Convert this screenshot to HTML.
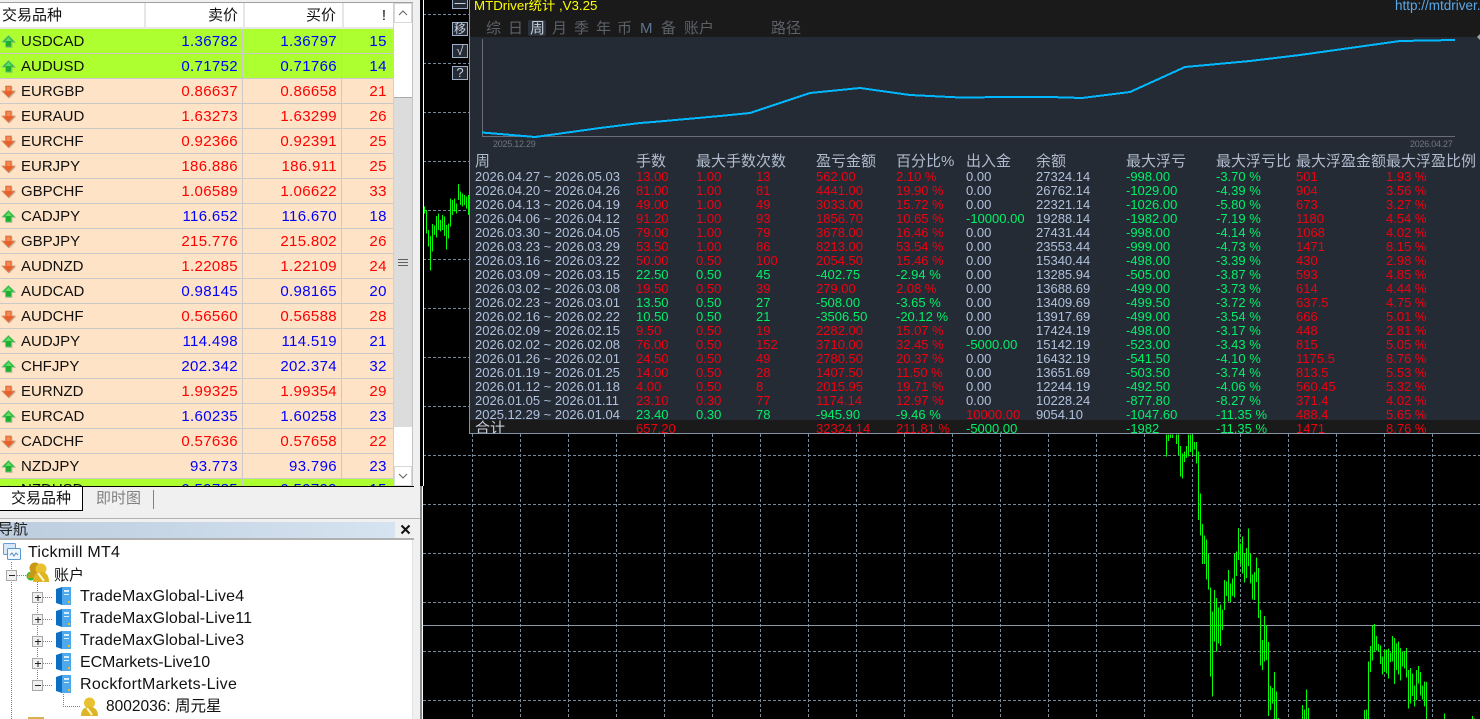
<!DOCTYPE html>
<html lang="zh">
<head>
<meta charset="utf-8">
<title>MTDriver</title>
<style>
*{box-sizing:border-box}
html,body{margin:0;padding:0;width:1480px;height:719px;overflow:hidden;background:#f0f0f0;font-family:"Liberation Sans","Noto Sans CJK SC",sans-serif}
.a{position:absolute}
#wl{left:0;top:3px;width:393px;height:26px;background:#fff;overflow:hidden}
#top{left:0;top:2px;width:413px;height:1px;background:#a0a0a0}
.h{position:absolute;top:0;height:24px;line-height:25px;font-size:15px;color:#111;text-align:right;padding-right:4px;background:#fff}
#hl{left:0;top:27px;width:393px;height:2px;background:#e6e6e6;z-index:1}
.sep{position:absolute;top:0;width:2px;height:24px;background:#e6e6e6}
#rows{left:0;top:29px;width:393px;height:457px;overflow:hidden}
.r{position:relative;height:25px;border-bottom:1px solid #c9c9c9;background:#ffe3c6;font-size:15px;line-height:26px;color:#f00}
.r.g{background:#adff2f}
.r svg{position:absolute;left:1px;top:5px;width:15px;height:15px}
.r b{position:absolute;left:21px;top:0;font-weight:400;color:#111}
.r i{position:absolute;top:0;height:25px;font-style:normal;text-align:right;border-right:1px solid #c9c9c9;padding-right:4px;letter-spacing:.35px}
.r i:nth-of-type(1){left:143px;width:100px}
.r i:nth-of-type(2){left:242px;width:100px}
.r s{position:absolute;left:342px;width:45px;text-align:right;text-decoration:none;letter-spacing:.5px;top:0}
.b{color:#00f}
#sb{left:393px;top:3px;width:20px;height:483px;background:#fff;border-left:1px solid #d0d0d0;border-right:1px solid #c4c4c4}
#th{left:394px;top:97px;width:18px;height:330px;background:#dcdcdc;border-top:1px solid #aaa}
.sbb{position:absolute;left:394px;width:18px;height:20px;background:#fff;border:1px solid #d8d8d8}
#tabs{left:0;top:486px;width:414px;height:33px;background:#f0f0f0;border-top:1px solid #000;border-bottom:1px solid #c8c8c8}
#tab1{left:0;top:487px;width:83px;height:24px;background:#fff;border-right:1px solid #000;border-bottom:1px solid #000;font-size:15px;line-height:24px;padding-left:11px;color:#111}
#tab2{left:96px;top:488px;font-size:15px;line-height:21px;color:#808080}
#tdiv{left:153px;top:490px;width:1px;height:19px;background:#808080}
#hb{left:0;top:518px;width:420px;height:1px;background:#b4b4b4}
#nt{left:0;top:522px;width:395px;height:17px;background:linear-gradient(90deg,#bccddf,#d6e3f0);font-size:15px;line-height:15px;text-indent:-2px;color:#222;overflow:hidden}
#nl{left:0;top:538px;width:414px;height:2px;background:#b0b0b0}
#tree{left:0;top:540px;width:413px;height:179px;background:#fff;border-right:1px solid #e2e2e2}
.t{position:absolute;font-size:16px;line-height:20px;color:#111;white-space:nowrap}
#g1{left:420px;top:0;width:3px;height:486px;background:#000}
#g2{left:423px;top:0;width:1px;height:486px;background:#fff}
#g3{left:420px;top:486px;width:2px;height:233px;background:#8a8a8a}
#g4{left:422px;top:486px;width:1px;height:233px;background:#fff}
#chart{left:423px;top:0;width:1057px;height:719px;background:#000}
#dash{left:469px;top:0;width:1011px;height:434px;background:#252b35;border-left:1px solid #8494a8;border-bottom:1px solid #8494a8;overflow:hidden}
#tb{left:0;top:0;width:1011px;height:37px;background:#1a1a1a}
#tot{left:0;top:420px;width:1011px;height:13px;background:#1a1a1a}
.x{position:absolute;white-space:nowrap}
.m{top:21px;font-size:15px;line-height:16px;color:#5c6168}
.q{left:452px;position:absolute;width:16px;height:14px;background:#252b35;border:1px solid #9fb0c8;color:#c9d4e2;font-size:12px;line-height:12px;text-align:center;overflow:hidden}
.hd span{position:absolute;top:0;font-size:15px;line-height:16px;color:#b0bccd;white-space:nowrap}
#data{left:5px;top:170px;width:1006px}
.d{position:relative;height:14px;font-size:13px;line-height:14px;color:#f00010}
.d span{position:absolute;top:0;white-space:nowrap}
.d span:nth-child(1){left:0;color:#b0c1dc}
.d span:nth-child(2){left:161px}
.d span:nth-child(3){left:221px}
.d span:nth-child(4){left:281px}
.d span:nth-child(5){left:341px}
.d span:nth-child(6){left:421px}
.d span:nth-child(7){left:491px;color:#b0c1dc}
.d span:nth-child(8){left:561px;color:#b0c1dc}
.d span:nth-child(9){left:651px;color:#00f068}
.d span:nth-child(10){left:741px;color:#00f068}
.d span:nth-child(11){left:821px;color:#f00010}
.d span:nth-child(12){left:911px;color:#f00010}
.d.n span:nth-child(2),.d.n span:nth-child(3),.d.n span:nth-child(4),.d.n span:nth-child(5),.d.n span:nth-child(6){color:#00f068}
.d span.gg{color:#00f068}
.d span.rr{color:#f00010}
</style>
</head>
<body>
<svg width="0" height="0" style="position:absolute">
<symbol id="u" viewBox="0 0 15 15"><path d="M8.500 2.500 15 9h-3.500v5h-6V9H2z" fill="#777" opacity=".35"/><path d="M7.500 1.500 14 8h-3.500v5h-6V8H1z" fill="#1fae2f" stroke="#7fc88a" stroke-width=".8"/><path d="M7.500 3 11 7H4z" fill="#5fe060"/></symbol>
<symbol id="d" viewBox="0 0 15 15"><path d="M5.500 3h6v5H15l-6.500 6.500L2 8h3.500z" fill="#777" opacity=".35"/><path d="M4.500 2h6v5H14l-6.500 6.500L1 7h3.500z" fill="#e8602a" stroke="#c9926e" stroke-width=".8"/><path d="M5.500 3h4v4h-4z" fill="#f58a50"/></symbol>
<symbol id="srv" viewBox="0 0 17 20"><path d="M1 3 7 1v18l-6-2z" fill="#0c6fc4"/><path d="M7 1h9v18H7z" fill="#4ea9ec"/><path d="M9 4h5v2H9zM9 8h5v1H9z" fill="#d8efff"/><path d="M13 15h2v2h-2z" fill="#f0c020"/></symbol>
</svg>

<div class="a" id="top"></div>
<div class="a" id="wl">
  <div class="h" style="left:0;width:143px;text-align:left;padding-left:2px">交易品种</div>
  <div class="h" style="left:145px;width:98px;padding-right:5px">卖价</div>
  <div class="h" style="left:245px;width:96px;padding-right:5px">买价</div>
  <div class="h" style="left:344px;width:48px;padding-right:6px">!</div>
  <div class="sep" style="left:144px"></div><div class="sep" style="left:243px"></div><div class="sep" style="left:342px"></div>
</div>
<div class="a" id="hl"></div>
<div class="a" id="rows">
<div class="r g b"><svg><use href="#u"/></svg><b>USDCAD</b><i>1.36782</i><i>1.36797</i><s>15</s></div>
<div class="r g b"><svg><use href="#u"/></svg><b>AUDUSD</b><i>0.71752</i><i>0.71766</i><s>14</s></div>
<div class="r"><svg><use href="#d"/></svg><b>EURGBP</b><i>0.86637</i><i>0.86658</i><s>21</s></div>
<div class="r"><svg><use href="#d"/></svg><b>EURAUD</b><i>1.63273</i><i>1.63299</i><s>26</s></div>
<div class="r"><svg><use href="#d"/></svg><b>EURCHF</b><i>0.92366</i><i>0.92391</i><s>25</s></div>
<div class="r"><svg><use href="#d"/></svg><b>EURJPY</b><i>186.886</i><i>186.911</i><s>25</s></div>
<div class="r"><svg><use href="#d"/></svg><b>GBPCHF</b><i>1.06589</i><i>1.06622</i><s>33</s></div>
<div class="r b"><svg><use href="#u"/></svg><b>CADJPY</b><i>116.652</i><i>116.670</i><s>18</s></div>
<div class="r"><svg><use href="#d"/></svg><b>GBPJPY</b><i>215.776</i><i>215.802</i><s>26</s></div>
<div class="r"><svg><use href="#d"/></svg><b>AUDNZD</b><i>1.22085</i><i>1.22109</i><s>24</s></div>
<div class="r b"><svg><use href="#u"/></svg><b>AUDCAD</b><i>0.98145</i><i>0.98165</i><s>20</s></div>
<div class="r"><svg><use href="#d"/></svg><b>AUDCHF</b><i>0.56560</i><i>0.56588</i><s>28</s></div>
<div class="r b"><svg><use href="#u"/></svg><b>AUDJPY</b><i>114.498</i><i>114.519</i><s>21</s></div>
<div class="r b"><svg><use href="#u"/></svg><b>CHFJPY</b><i>202.342</i><i>202.374</i><s>32</s></div>
<div class="r"><svg><use href="#d"/></svg><b>EURNZD</b><i>1.99325</i><i>1.99354</i><s>29</s></div>
<div class="r b"><svg><use href="#u"/></svg><b>EURCAD</b><i>1.60235</i><i>1.60258</i><s>23</s></div>
<div class="r"><svg><use href="#d"/></svg><b>CADCHF</b><i>0.57636</i><i>0.57658</i><s>22</s></div>
<div class="r b"><svg><use href="#u"/></svg><b>NZDJPY</b><i>93.773</i><i>93.796</i><s>23</s></div>
<div class="r g b" style="line-height:22px"><svg><use href="#u"/></svg><b>NZDUSD</b><i>0.59785</i><i>0.59799</i><s>15</s></div>
</div>

<div class="a" id="sb"></div>
<div class="a" id="th"></div>
<div class="sbb" style="top:3px"></div>
<div class="sbb" style="top:466px"></div>
<svg class="a" style="left:394px;top:3px" width="18" height="483"><path d="M5 12l4-4 4 4M5 471l4 4 4-4" fill="none" stroke="#606060" stroke-width="1"/><path d="M4 256.500h10M4 259.500h10M4 262.500h10" stroke="#606060"/></svg>

<div class="a" id="tabs"></div>
<div class="a" id="tab1">交易品种</div>
<div class="a" id="tab2">即时图</div>
<div class="a" id="tdiv"></div>
<div class="a" id="hb"></div>
<div class="a" id="nt">导航</div>
<svg class="a" style="left:400px;top:524px" width="11" height="11"><path d="M1.500 1.500l8 8M9.500 1.500l-8 8" stroke="#111" stroke-width="2" fill="none"/></svg>
<div class="a" id="nl"></div>

<div class="a" id="tree">
<svg class="a" style="left:0;top:0" width="413" height="179">
  <g fill="none" stroke="#808080" stroke-dasharray="1 1">
    <path d="M11.500 22V179M37.500 42V152M17 35.500h9M43 57.500h10M43 79.500h10M43 101.500h10M43 123.500h10M43 145.500h10M63.500 152V166.500H80"/>
  </g>
  <g fill="#f0f0f0" stroke="#a8a8a8">
    <rect x="6.500" y="30.500" width="10" height="10"/>
    <rect x="32.500" y="52.500" width="10" height="10"/><rect x="32.500" y="74.500" width="10" height="10"/><rect x="32.500" y="96.500" width="10" height="10"/><rect x="32.500" y="118.500" width="10" height="10"/><rect x="32.500" y="140.500" width="10" height="10"/>
  </g>
  <path d="M9 35.500h6M35 57.500h6M38 55v6M35 79.500h6M38 77v6M35 101.500h6M38 99v6M35 123.500h6M38 121v6M35 145.500h6" stroke="#222" fill="none"/>
  <rect x="3.500" y="3.500" width="12" height="11" rx="1" fill="#d8e8f8" stroke="#6a9ed0"/>
  <rect x="7.500" y="8.500" width="13" height="11" rx="1" fill="#eef6ff" stroke="#5a96d0"/>
  <path d="M10 15l2-2 2 3 2-3 2 2" fill="none" stroke="#5a8ac0"/>
  <circle cx="31" cy="36" r="4.500" fill="#2ec02e"/>
  <circle cx="35" cy="28" r="5.500" fill="#c89818"/><path d="M28 38q0-7 7-7t7 7z" fill="#c89818"/>
  <circle cx="41" cy="29" r="5.500" fill="#e8c030"/><path d="M33 42q0-10 8-10t8 10z" fill="#dcb424"/><path d="M38 33l6 8" stroke="#fff6c0" stroke-width="2"/>
  <circle cx="89.500" cy="163" r="5.500" fill="#e8c030"/><path d="M81 176q0-9 8.500-9t8.500 9z" fill="#dcb424"/><path d="M87 168l5 7" stroke="#fff6c0" stroke-width="2"/>
  <path d="M28 179v-2h16v2z" fill="#d8b050"/>
  <use href="#srv" x="55" y="46" width="17" height="20"/>
  <use href="#srv" x="55" y="68" width="17" height="20"/>
  <use href="#srv" x="55" y="90" width="17" height="20"/>
  <use href="#srv" x="55" y="112" width="17" height="20"/>
  <use href="#srv" x="55" y="134" width="17" height="20"/>
</svg>
<div class="t" style="left:28px;top:3px;letter-spacing:.25px">Tickmill MT4</div>
<div class="t" style="left:54px;top:26px;font-size:15px">账户</div>
<div class="t" style="left:80px;top:47px;letter-spacing:.15px">TradeMaxGlobal-Live4</div>
<div class="t" style="left:80px;top:69px;letter-spacing:.15px">TradeMaxGlobal-Live11</div>
<div class="t" style="left:80px;top:91px;letter-spacing:.15px">TradeMaxGlobal-Live3</div>
<div class="t" style="left:80px;top:113px;letter-spacing:-.1px">ECMarkets-Live10</div>
<div class="t" style="left:80px;top:135px;letter-spacing:.3px">RockfortMarkets-Live</div>
<div class="t" style="left:106px;top:157px;font-size:15.500px">8002036: 周元星</div>
</div>

<div class="a" id="chart"></div>
<svg class="a" style="left:423px;top:0" width="1057" height="719" shape-rendering="crispEdges">
  <g fill="none" stroke="#778899" stroke-width="1" stroke-dasharray="3 2">
    <path d="M0 14.500H1057M0 63.500H1057M0 112.500H1057M0 161.500H1057M0 210.500H1057M0 259.500H1057M0 308.500H1057M0 357.500H1057M0 406.500H1057M0 455.500H1057M0 504.500H1057M0 553.500H1057M0 602.500H1057M0 651.500H1057M0 700.500H1057"/>
    <path d="M49.500 434V719M97.500 434V719M145.500 434V719M193.500 434V719M241.500 434V719M289.500 434V719M337.500 434V719M385.500 434V719M433.500 434V719M481.500 434V719M529.500 434V719M577.500 434V719M625.500 434V719M673.500 434V719M721.500 434V719M769.500 434V719M817.500 434V719M865.500 434V719M913.500 434V719M961.500 434V719M1009.500 434V719"/>
  </g>
  <path d="M0 625.500H1057" stroke="#8a96a6"/>
</svg>
<svg class="a" style="left:1100px;top:430px" width="380" height="289" viewBox="0 0 1140 867" shape-rendering="crispEdges">
<path fill="none" stroke="#00ff00" stroke-width="3" d="M199 14V80M205 14V33M211 14V24M217 14V24M229 14V42M235 14V75M241 48V140M247 70V146M253 64V96M259 48V84M265 14V80M271 14V66M277 14V76M283 36V58M289 36V100M295 64V270M301 190V316M307 282V402M313 316V402M319 328V448M325 372V478M331 472V740M337 544V800M343 480V634M349 504V664M355 532V640M361 524V648M367 538V600M373 450V540M379 454V498M385 420V514M391 460V516M397 446V498M403 372V502M409 364V438M415 294V390M421 340V404M427 320V430M433 370V458M439 354V444M445 296V408M451 370V460M457 434V508M463 426V510M469 382V456M475 414V564M481 540V706M487 630V720M493 558V694M499 586V690M505 636V858M511 768V840M517 774V820M523 726V867M529 784V867M535 864V867M607 825V867M613 838V867M619 778V867M625 834V867M793 840V867M799 838V867M805 694V867M811 648V726M817 586V692M823 582V664M829 618V662M835 642V664M841 646V702M847 680V734M853 658V726M859 658V730M865 656V746M871 668V696M877 618V694M883 624V762M889 640V720M895 634V734M901 654V752M907 664V710M913 664V716M919 654V742M925 720V836M931 714V820M937 730V798M943 766V830M949 720V810M955 708V760M961 726V796M967 766V808M973 754V830M979 756V867M1033 850V867M1117 858V867M1123 866V867"/>
</svg>
<svg class="a" style="left:420px;top:150px" width="50" height="100" viewBox="0 0 150 300" shape-rendering="crispEdges" overflow="visible">
<path fill="none" stroke="#00ff00" stroke-width="3" d="M13 170V190M19 180V250M25 240V290M31 258V362M37 222V305M43 226V255M49 198V262M55 190V240M61 210V245M67 195V240M73 200V258M79 225V298M85 220V265M91 145V230M97 150V195M103 145V185M109 160V190M115 102V150M121 125V165M127 130V170M133 135V165M139 140V175M145 135V195"/>
</svg>
<div class="a" id="g1"></div><div class="a" id="g2"></div><div class="a" id="g3"></div><div class="a" id="g4"></div>

<div class="q" style="top:-5px;line-height:16px">一</div>
<div class="q" style="top:22px">移</div>
<div class="q" style="top:44px;font-size:13px">√</div>
<div class="q" style="top:66px;font-size:13px">?</div>

<div class="a" id="dash">
  <div class="a" id="tb"></div>
  <div class="a" id="tot"></div>
  <div class="x" style="left:4px;top:-2px;font-size:13.300px;line-height:16px;color:#ffff00">MTDriver统计 ,V3.25</div>
  <div class="x" style="left:925px;top:-2px;font-size:13.500px;line-height:16px;color:#5aa8e8">http://mtdriver.com</div>
  <div class="a" style="left:58px;top:20px;width:18px;height:16px;background:#2a323e;border-radius:2px"></div>
  <div class="x m" style="left:16px">综</div>
  <div class="x m" style="left:38px">日</div>
  <div class="x m" style="left:60px;color:#c4ccd6">周</div>
  <div class="x m" style="left:82px">月</div>
  <div class="x m" style="left:104px">季</div>
  <div class="x m" style="left:126px">年</div>
  <div class="x m" style="left:147px">币</div>
  <div class="x m" style="left:170px;color:#5f7490">M</div>
  <div class="x m" style="left:191px">备</div>
  <div class="x m" style="left:214px">账户</div>
  <div class="x m" style="left:301px">路径</div>

  <svg class="a" style="left:0;top:0" width="1011" height="150">
    <path d="M12.500 39V136.500H985" fill="none" stroke="#6a6e74" stroke-width="1" shape-rendering="crispEdges"/>
    <polyline fill="none" stroke="#00b8ff" stroke-width="2" shape-rendering="crispEdges" points="12,132.500 30,134 65,137 130,128 170,123 183,122 250,116 280,113 340,93 390,88 440,95 490,97.500 540,97 580,97 612,98 660,92 715,67 780,61 830,55 930,41 985,40"/>
    <path d="M1011 33v8l-4-4z" fill="#a0a0a0"/>
  </svg>
  <div class="x" style="left:23px;top:138px;font-size:9px;line-height:12px;color:#6f7680;letter-spacing:-.25px">2025.12.29</div>
  <div class="x" style="left:940px;top:138px;font-size:9px;line-height:12px;color:#6f7680;letter-spacing:-.25px">2026.04.27</div>

  <div class="a hd" style="left:5px;top:154px;width:1006px;height:16px">
    <span style="left:0">周</span><span style="left:161px">手数</span><span style="left:221px">最大手数</span><span style="left:281px">次数</span><span style="left:341px">盈亏金额</span><span style="left:421px">百分比%</span><span style="left:491px">出入金</span><span style="left:561px">余额</span><span style="left:651px">最大浮亏</span><span style="left:741px">最大浮亏比</span><span style="left:821px">最大浮盈金额</span><span style="left:911px">最大浮盈比例</span>
  </div>

  <div class="a" id="data">
<div class="d"><span>2026.04.27 ~ 2026.05.03</span><span>13.00</span><span>1.00</span><span>13</span><span>562.00</span><span>2.10 %</span><span>0.00</span><span>27324.14</span><span>-998.00</span><span>-3.70 %</span><span>501</span><span>1.93 %</span></div>
<div class="d"><span>2026.04.20 ~ 2026.04.26</span><span>81.00</span><span>1.00</span><span>81</span><span>4441.00</span><span>19.90 %</span><span>0.00</span><span>26762.14</span><span>-1029.00</span><span>-4.39 %</span><span>904</span><span>3.56 %</span></div>
<div class="d"><span>2026.04.13 ~ 2026.04.19</span><span>49.00</span><span>1.00</span><span>49</span><span>3033.00</span><span>15.72 %</span><span>0.00</span><span>22321.14</span><span>-1026.00</span><span>-5.80 %</span><span>673</span><span>3.27 %</span></div>
<div class="d"><span>2026.04.06 ~ 2026.04.12</span><span>91.20</span><span>1.00</span><span>93</span><span>1856.70</span><span>10.65 %</span><span class="gg">-10000.00</span><span>19288.14</span><span>-1982.00</span><span>-7.19 %</span><span>1180</span><span>4.54 %</span></div>
<div class="d"><span>2026.03.30 ~ 2026.04.05</span><span>79.00</span><span>1.00</span><span>79</span><span>3678.00</span><span>16.46 %</span><span>0.00</span><span>27431.44</span><span>-998.00</span><span>-4.14 %</span><span>1068</span><span>4.02 %</span></div>
<div class="d"><span>2026.03.23 ~ 2026.03.29</span><span>53.50</span><span>1.00</span><span>86</span><span>8213.00</span><span>53.54 %</span><span>0.00</span><span>23553.44</span><span>-999.00</span><span>-4.73 %</span><span>1471</span><span>8.15 %</span></div>
<div class="d"><span>2026.03.16 ~ 2026.03.22</span><span>50.00</span><span>0.50</span><span>100</span><span>2054.50</span><span>15.46 %</span><span>0.00</span><span>15340.44</span><span>-498.00</span><span>-3.39 %</span><span>430</span><span>2.98 %</span></div>
<div class="d n"><span>2026.03.09 ~ 2026.03.15</span><span>22.50</span><span>0.50</span><span>45</span><span>-402.75</span><span>-2.94 %</span><span>0.00</span><span>13285.94</span><span>-505.00</span><span>-3.87 %</span><span>593</span><span>4.85 %</span></div>
<div class="d"><span>2026.03.02 ~ 2026.03.08</span><span>19.50</span><span>0.50</span><span>39</span><span>279.00</span><span>2.08 %</span><span>0.00</span><span>13688.69</span><span>-499.00</span><span>-3.73 %</span><span>614</span><span>4.44 %</span></div>
<div class="d n"><span>2026.02.23 ~ 2026.03.01</span><span>13.50</span><span>0.50</span><span>27</span><span>-508.00</span><span>-3.65 %</span><span>0.00</span><span>13409.69</span><span>-499.50</span><span>-3.72 %</span><span>637.5</span><span>4.75 %</span></div>
<div class="d n"><span>2026.02.16 ~ 2026.02.22</span><span>10.50</span><span>0.50</span><span>21</span><span>-3506.50</span><span>-20.12 %</span><span>0.00</span><span>13917.69</span><span>-499.00</span><span>-3.54 %</span><span>666</span><span>5.01 %</span></div>
<div class="d"><span>2026.02.09 ~ 2026.02.15</span><span>9.50</span><span>0.50</span><span>19</span><span>2282.00</span><span>15.07 %</span><span>0.00</span><span>17424.19</span><span>-498.00</span><span>-3.17 %</span><span>448</span><span>2.81 %</span></div>
<div class="d"><span>2026.02.02 ~ 2026.02.08</span><span>76.00</span><span>0.50</span><span>152</span><span>3710.00</span><span>32.45 %</span><span class="gg">-5000.00</span><span>15142.19</span><span>-523.00</span><span>-3.43 %</span><span>815</span><span>5.05 %</span></div>
<div class="d"><span>2026.01.26 ~ 2026.02.01</span><span>24.50</span><span>0.50</span><span>49</span><span>2780.50</span><span>20.37 %</span><span>0.00</span><span>16432.19</span><span>-541.50</span><span>-4.10 %</span><span>1175.5</span><span>8.76 %</span></div>
<div class="d"><span>2026.01.19 ~ 2026.01.25</span><span>14.00</span><span>0.50</span><span>28</span><span>1407.50</span><span>11.50 %</span><span>0.00</span><span>13651.69</span><span>-503.50</span><span>-3.74 %</span><span>813.5</span><span>5.53 %</span></div>
<div class="d"><span>2026.01.12 ~ 2026.01.18</span><span>4.00</span><span>0.50</span><span>8</span><span>2015.95</span><span>19.71 %</span><span>0.00</span><span>12244.19</span><span>-492.50</span><span>-4.06 %</span><span>560.45</span><span>5.32 %</span></div>
<div class="d"><span>2026.01.05 ~ 2026.01.11</span><span>23.10</span><span>0.30</span><span>77</span><span>1174.14</span><span>12.97 %</span><span>0.00</span><span>10228.24</span><span>-877.80</span><span>-8.27 %</span><span>371.4</span><span>4.02 %</span></div>
<div class="d n"><span>2025.12.29 ~ 2026.01.04</span><span>23.40</span><span>0.30</span><span>78</span><span>-945.90</span><span>-9.46 %</span><span class="rr">10000.00</span><span>9054.10</span><span>-1047.60</span><span>-11.35 %</span><span>488.4</span><span>5.65 %</span></div>
<div class="d" style="height:15px"><span style="font-size:15px;color:#c8d0dc">合计</span><span>657.20</span><span></span><span></span><span>32324.14</span><span>211.81 %</span><span class="gg">-5000.00</span><span></span><span>-1982</span><span>-11.35 %</span><span>1471</span><span>8.76 %</span></div>
  </div>
</div>
</body>
</html>
